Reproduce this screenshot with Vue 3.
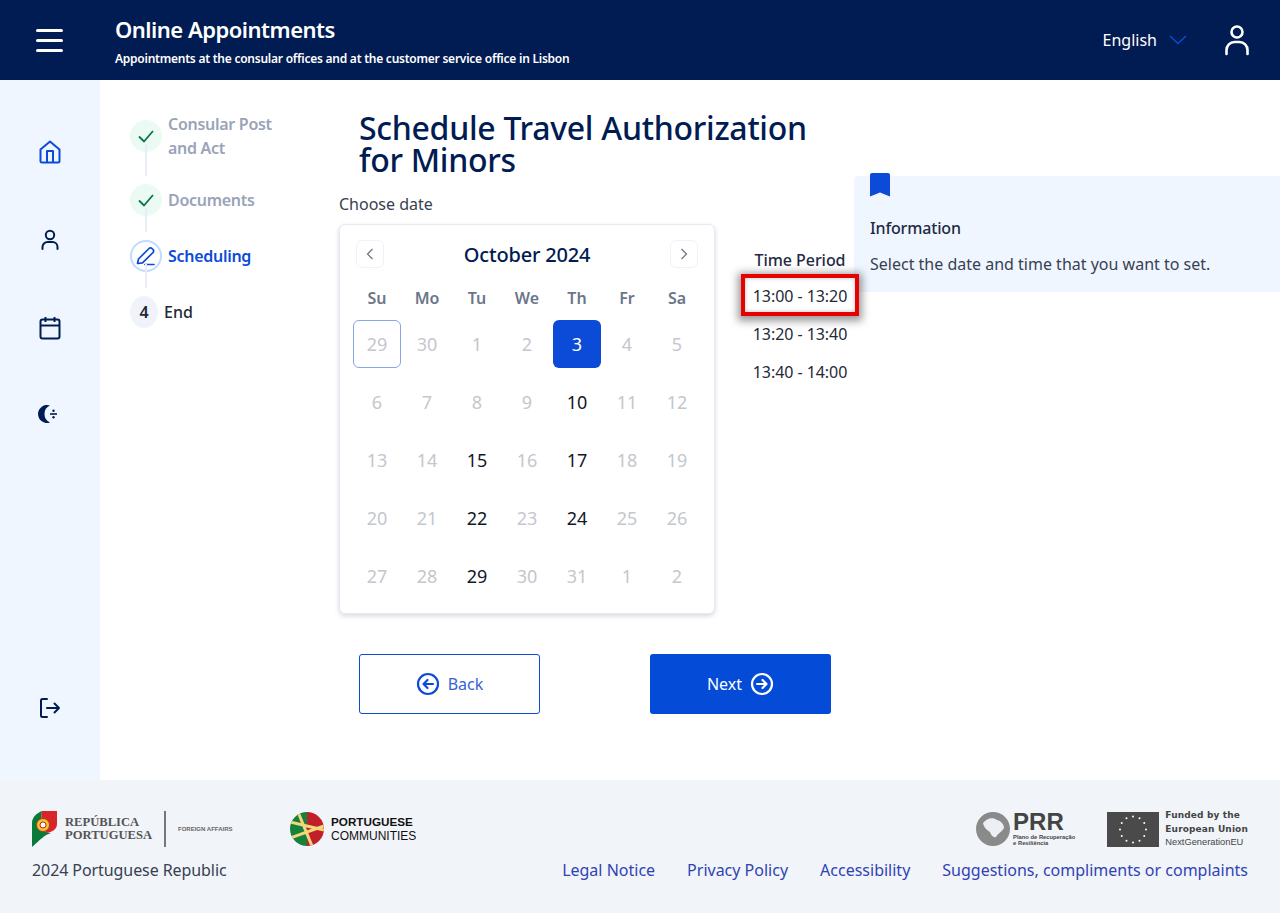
<script setup>
const weekdays = ['Su', 'Mo', 'Tu', 'We', 'Th', 'Fr', 'Sa']
const available = [3, 10, 15, 17, 22, 24, 29]
const seq = [29, 30, 1, 2, 3, 4, 5, 6, 7, 8, 9, 10, 11, 12, 13, 14, 15, 16, 17, 18, 19, 20, 21, 22, 23, 24, 25, 26, 27, 28, 29, 30, 31, 1, 2]
const days = seq.map((n, i) => {
  const inMonth = i >= 2 && i <= 32
  const cls = []
  if (i === 0) cls.push('today')
  if (i === 4) cls.push('selected')
  else if (inMonth && available.includes(n)) cls.push('avail')
  return { n, key: i, cls }
})
const times = ['13:00 - 13:20', '13:20 - 13:40', '13:40 - 14:00']
const stars = Array.from({ length: 12 }, (_, i) => {
  const a = (i * Math.PI) / 6
  return { x: 26 + Math.cos(a) * 13, y: 17.5 + Math.sin(a) * 13 }
})
</script>

<template>
  <div class="page">
    <header class="top">
      <div class="burger"><span></span><span></span><span></span></div>
      <div class="brand">
        <div class="brand-title">Online Appointments</div>
        <div class="brand-sub">Appointments at the consular offices and at the customer service office in Lisbon</div>
      </div>
      <div class="lang">
        <span>English</span>
        <svg width="18" height="10" viewBox="0 0 18 10" fill="none"><path d="M1 1l8 7.500L17 1" stroke="#0b4bd8" stroke-width="1.400"/></svg>
      </div>
      <svg class="user" width="24" height="32" viewBox="0 0 24 32" fill="none" stroke="#fff" stroke-width="2.600">
        <circle cx="12" cy="8" r="5.500"/>
        <path d="M1.500 30v-4a8 8 0 0 1 8-8h5a8 8 0 0 1 8 8v4" stroke-linecap="round"/>
      </svg>
    </header>

    <div class="body">
      <aside class="side">
        <svg class="nav nav-home" width="22" height="24" viewBox="0 0 22 24" fill="none" stroke="#0b4bd8" stroke-width="2" stroke-linejoin="round">
          <path d="M1.500 9.500L11 1.500l9.500 8V21a1.500 1.500 0 0 1-1.500 1.500H3A1.500 1.500 0 0 1 1.500 21z"/>
          <path d="M8 22.500V11h6v11.500"/>
        </svg>
        <svg class="nav nav-user" width="18" height="22" viewBox="0 0 18 22" fill="none" stroke="#001d52" stroke-width="2">
          <circle cx="9" cy="6" r="4.200"/>
          <path d="M1.500 20v-2a5 5 0 0 1 5-5h5a5 5 0 0 1 5 5v2" stroke-linecap="round"/>
        </svg>
        <svg class="nav nav-cal" width="22" height="24" viewBox="0 0 22 24" fill="none" stroke="#001d52" stroke-width="2">
          <rect x="1.500" y="3.500" width="19" height="19" rx="2"/>
          <path d="M1.500 9.500h19M6.500 1v5M15.500 1v5"/>
        </svg>
        <svg class="nav nav-moon" width="22" height="20" viewBox="0 0 22 20" fill="#001d52">
          <path d="M12 1.500A9 9 0 1 0 12 18.500A9.300 9.300 0 0 1 12 1.500z"/>
          <path d="M12 9.200h7v1.600h-7z"/><circle cx="15.500" cy="6.800" r="1.200"/><circle cx="15.500" cy="13.200" r="1.200"/>
        </svg>
        <svg class="nav nav-exit" width="22" height="22" viewBox="0 0 22 22" fill="none" stroke="#001d52" stroke-width="2" stroke-linecap="round" stroke-linejoin="round">
          <path d="M8 2H3.500A1.500 1.500 0 0 0 2 3.500v15A1.500 1.500 0 0 0 3.500 20H8"/>
          <path d="M8 11h12M15.500 6.500L20 11l-4.500 4.500"/>
        </svg>
      </aside>

      <main class="main">
        <ol class="steps">
          <li class="step done tall">
            <span class="dot"><svg width="18" height="14" viewBox="0 0 18 14" fill="none"><path d="M2 7.500l5 5L16 2" stroke="#04744f" stroke-width="1.800"/></svg></span>
            <span class="label">Consular Post<br>and Act</span>
          </li>
          <li class="step done">
            <span class="dot"><svg width="18" height="14" viewBox="0 0 18 14" fill="none"><path d="M2 7.500l5 5L16 2" stroke="#04744f" stroke-width="1.800"/></svg></span>
            <span class="label">Documents</span>
          </li>
          <li class="step current">
            <span class="dot">
              <svg width="20" height="20" viewBox="0 0 20 20" fill="none" stroke="#0b4bd8" stroke-width="1.700" stroke-linecap="round" stroke-linejoin="round"><path d="M1.500 17.500l1-4.500L13 2.500a2 2 0 0 1 3 0l1 1a2 2 0 0 1 0 3L6.500 16.800z"/><path d="M9 18.500h9"/></svg>
            </span>
            <span class="label">Scheduling</span>
          </li>
          <li class="step todo">
            <span class="dot">4</span>
            <span class="label">End</span>
          </li>
        </ol>

        <section class="center">
          <h1 class="title">Schedule Travel Authorization for Minors</h1>
          <div class="picker-row">
            <div class="picker">
              <div class="choose">Choose date</div>
              <div class="card">
                <div class="cal-head">
                  <button class="arrow"><svg width="8" height="12" viewBox="0 0 8 12" fill="none"><path d="M6.500 1l-5 5 5 5" stroke="#6b7280" stroke-width="1.200"/></svg></button>
                  <div class="month">October 2024</div>
                  <button class="arrow"><svg width="8" height="12" viewBox="0 0 8 12" fill="none"><path d="M1.500 1l5 5-5 5" stroke="#6b7280" stroke-width="1.200"/></svg></button>
                </div>
                <div class="grid week">
                  <div v-for="w in weekdays" :key="w" class="wd">{{ w }}</div>
                </div>
                <div class="grid">
                  <div v-for="d in days" :key="d.key" class="day" :class="d.cls">{{ d.n }}</div>
                </div>
              </div>
            </div>
            <div class="times">
              <div class="times-head">Time Period</div>
              <div v-for="(t, i) in times" :key="t" class="time" :class="{ marked: i === 0 }">{{ t }}</div>
            </div>
          </div>
          <div class="actions">
            <button class="btn ghost">
              <svg width="24" height="24" viewBox="0 0 24 24" fill="none" stroke="#0b4bd8" stroke-width="2.200" stroke-linecap="round" stroke-linejoin="round"><circle cx="12" cy="12" r="10"/><path d="M17 12H7.500M11.500 8l-4 4 4 4"/></svg>
              <span>Back</span>
            </button>
            <button class="btn solid">
              <span>Next</span>
              <svg width="24" height="24" viewBox="0 0 24 24" fill="none" stroke="#fff" stroke-width="2.200" stroke-linecap="round" stroke-linejoin="round"><circle cx="12" cy="12" r="10"/><path d="M7 12h9.500M12.500 8l4 4-4 4"/></svg>
            </button>
          </div>
        </section>

        <aside class="info">
          <svg class="bookmark" width="20" height="24" viewBox="0 0 20 24"><path d="M2 0h16a2 2 0 0 1 2 2v21.500l-10-4-10 4V2a2 2 0 0 1 2-2z" fill="#0b4bd8"/></svg>
          <div class="info-title">Information</div>
          <div class="info-text">Select the date and time that you want to set.</div>
        </aside>
      </main>
    </div>

    <footer class="foot">
      <div class="logos">
        <div class="logos-left">
          <div class="logo-rp">
            <svg class="fixed" width="26" height="36" viewBox="0 0 26 36">
              <path d="M0 12C0 6 5 2 10 0c-1 5-1 10 0 14 1 5 3 8 9 8-7 2-11 7-19 14z" fill="#0a7a3b"/>
              <path d="M10 0h15v13c0 6-6 8-10 9-3-2-4-5-5-8-1-5-1-10 0-14z" fill="#d9252a"/>
              <circle cx="11" cy="14" r="6.500" fill="#f2c230" stroke="#a3451f"/>
              <circle cx="11" cy="14" r="3" fill="#fff" stroke="#c22"/>
            </svg>
            <div class="rp-name">REPÚBLICA<br>PORTUGUESA</div>
            <div class="rp-bar"></div>
            <div class="rp-min">FOREIGN AFFAIRS</div>
          </div>
          <div class="logo-pc">
            <svg class="fixed" width="34" height="34" viewBox="0 0 34 34">
              <defs><clipPath id="globe"><circle cx="17" cy="17" r="17"/></clipPath></defs>
              <g clip-path="url(#globe)">
                <rect width="17" height="34" fill="#14813c"/>
                <rect x="17" width="17" height="34" fill="#c0202a"/>
                <path d="M0 10l34 8M0 26l34-12M8 0l14 34" stroke="#f4d77b" stroke-width="3" fill="none"/>
              </g>
            </svg>
            <div class="pc-name"><b>PORTUGUESE</b><br>COMMUNITIES</div>
          </div>
        </div>
        <div class="logos-right">
          <div class="logo-prr">
            <svg class="fixed" width="36" height="36" viewBox="0 0 36 36">
              <circle cx="18" cy="18" r="17" fill="#8a8a8a"/>
              <path d="M8 12c4-5 10-6 14-3 4 1 7 4 7 8-2 4-6 5-8 9-3 1-5-2-6-5-3-2-6-4-7-9z" fill="#eceff4"/>
            </svg>
            <div class="prr-text"><b>PRR</b><span>Plano de Recuperação<br>e Resiliência</span></div>
          </div>
          <div class="logo-eu">
            <svg class="fixed" width="52" height="35" viewBox="0 0 52 35">
              <rect width="52" height="35" fill="#4a4a4a"/>
              <circle v-for="(s, i) in stars" :key="i" :cx="s.x" :cy="s.y" r="1" fill="#fff"/>
            </svg>
            <div class="eu-text"><b>Funded by the<br>European Union</b><span>NextGenerationEU</span></div>
          </div>
        </div>
      </div>
      <div class="foot-row">
        <div class="copy">2024 Portuguese Republic</div>
        <nav class="links">
          <a>Legal Notice</a>
          <a>Privacy Policy</a>
          <a>Accessibility</a>
          <a>Suggestions, compliments or complaints</a>
        </nav>
      </div>
    </footer>
  </div>
</template>

<style>
html, body { margin: 0; background: #fff; }
</style>

<style scoped>
* { box-sizing: border-box; }
.page { width: 1280px; height: 913px; display: flex; flex-direction: column; font-family: "Noto Sans", sans-serif; color: #1f2937; overflow: hidden; }
.fixed { flex: none; }

.top { height: 80px; flex: none; background: #001c52; color: #fff; display: flex; align-items: center; padding: 0 31px 0 36px; }
.burger { width: 27px; display: flex; flex-direction: column; gap: 7px; margin-right: 52px; }
.burger span { height: 3px; border-radius: 2px; background: #fff; }
.brand { flex: 1; padding-top: 1px; }
.brand-title { font-size: 22px; font-weight: 600; line-height: 30px; letter-spacing: -0.5px; }
.brand-sub { font-size: 12px; font-weight: 600; line-height: 18px; margin-top: 6px; letter-spacing: -0.24px; }
.lang { display: flex; align-items: center; gap: 12px; font-size: 16px; margin-right: 38px; }

.body { flex: 1; display: flex; min-height: 0; }
.side { width: 100px; flex: none; background: #eff6ff; display: flex; flex-direction: column; align-items: center; position: relative; }
.nav { position: absolute; }
.nav-home { left: 39px; top: 60px; }
.nav-user { left: 41px; top: 149px; }
.nav-cal { left: 39px; top: 236px; }
.nav-moon { left: 38px; top: 324px; }
.nav-exit { left: 39px; top: 617px; }

.main { flex: 1; display: flex; align-items: flex-start; position: relative; }
.steps { list-style: none; margin: 0; width: 239px; padding: 32px 0 0 30px; flex: none; }
.step { display: flex; position: relative; height: 56px; }
.step.tall { height: 64px; }
.step:not(:last-child)::after { content: ""; position: absolute; left: 15px; top: 32px; bottom: 0; width: 2px; background: #e9eef6; }
.dot { width: 32px; height: 32px; border-radius: 50%; display: flex; align-items: center; justify-content: center; flex: none; margin-top: 8px; }
.label { font-size: 16px; font-weight: 600; line-height: 24px; margin-left: 6px; letter-spacing: -0.28px; }
.step.done:not(.tall) .label, .step.current .label, .step.todo .label { margin-top: 12px; }
.step.done .dot { background: #ebfaf3; }
.step.done .label { color: #9aa3b8; }
.step.current .dot { background: #fff; border: 2px solid #bfdbfe; }
.step.current .label { color: #0b4bd8; }
.step.todo .dot { background: #f0f3f9; font-size: 16px; font-weight: 600; width: 28px; }
.step.todo .label { color: #1f2937; font-weight: 500; letter-spacing: 0; }

.center { width: 515px; flex: none; }
.title { margin: 32px 0 0 20px; width: 470px; font-size: 32px; line-height: 32px; font-weight: 500; color: #001c52; letter-spacing: -0.28px; }
.picker-row { display: flex; margin-top: 16px; }
.picker { width: 376px; flex: none; }
.choose { font-size: 16px; line-height: 24px; height: 32px; color: #374151; }
.card { height: 390px; border: 1px solid #e5e9f2; border-radius: 6px; box-shadow: 0 2px 5px rgba(30, 40, 70, 0.18); padding: 14px 12px 0 12px; background: #fff; }
.cal-head { display: flex; align-items: center; justify-content: space-between; padding: 0 4px 0 4px; height: 30px; }
.arrow { width: 28px; height: 28px; padding: 0; border: 1px solid #f0f2f7; border-radius: 6px; background: #fff; display: flex; align-items: center; justify-content: center; }
.month { font-size: 20px; font-weight: 500; color: #001c52; letter-spacing: -0.2px; }
.grid { display: grid; grid-template-columns: repeat(7, 50px); }
.week { margin-top: 17px; height: 34px; }
.wd { text-align: center; font-size: 16px; font-weight: 600; color: #6b7689; line-height: 24px; }
.day { width: 48px; height: 48px; margin: 0 1px 10px; display: flex; align-items: center; justify-content: center; font-size: 18px; color: #c4c7cd; border-radius: 6px; border: 1px solid transparent; }
.day.today { border-color: #87a5ec; }
.day.avail { color: #111827; }
.day.selected { background: #0b4bd8; color: #fff; }

.times { width: 118px; flex: none; margin-left: 26px; padding-top: 56px; position: relative; z-index: 2; }
.times-head { text-align: center; font-size: 16px; font-weight: 500; line-height: 24px; color: #1f2a44; margin-bottom: 2px; letter-spacing: -0.05px; }
.time { height: 38px; display: flex; align-items: center; justify-content: center; font-size: 16px; color: #1f2937; letter-spacing: -0.06px; }
.time.marked { height: 42px; margin-bottom: -1px; padding-top: 2px; border: 4px solid #e60000; box-shadow: 0 2px 8px 3px rgba(0, 0, 0, 0.4), inset 0 0 4px rgba(0, 0, 0, 0.25); background: #fff; }

.actions { display: flex; gap: 110px; margin: 40px 0 0 20px; }
.btn { width: 181px; height: 60px; border-radius: 3px; font: 400 16px "Noto Sans", sans-serif; display: flex; align-items: center; justify-content: center; gap: 8px; }
.ghost { background: #fff; border: 1px solid #0b4bd8; color: #3563d6; }
.solid { background: #044bd8; border: 0; color: #fff; }

.info { width: 426px; height: 116px; margin-top: 96px; background: #eff6ff; border-radius: 4px 0 0 4px; padding: 0 16px; position: relative; }
.bookmark { position: absolute; left: 16px; top: -3px; }
.info-title { margin-top: 40px; font-size: 16px; font-weight: 500; line-height: 24px; color: #1f2a44; letter-spacing: -0.15px; }
.info-text { margin-top: 12px; font-size: 16px; line-height: 24px; color: #374151; }

.foot { height: 133px; flex: none; background: #f1f4f9; padding: 30px 32px 0; }
.logos { display: flex; justify-content: space-between; align-items: center; height: 38px; }
.logos-left { display: flex; align-items: center; gap: 57px; }
.logo-rp { display: flex; align-items: center; width: 201px; }
.rp-name { margin-left: 7px; font: 700 12.600px/13px "Liberation Serif", serif; color: #555; white-space: nowrap; }
.rp-bar { width: 2px; height: 36px; background: #777; margin-left: 12px; flex: none; }
.rp-min { font: 700 6px "Liberation Sans", sans-serif; color: #666; margin-left: 12px; white-space: nowrap; }
.logo-pc { display: flex; align-items: center; gap: 7px; }
.pc-name { font: 400 12px/14px "Liberation Sans", sans-serif; color: #111; }
.pc-name b { font-size: 11.700px; }
.logos-right { display: flex; align-items: center; gap: 32px; }
.logo-prr { display: flex; align-items: center; gap: 2px; }
.prr-text { display: flex; flex-direction: column; color: #444; }
.prr-text b { font: 700 24px/20px "Liberation Sans", sans-serif; }
.prr-text span { font: 700 5.800px/6px "Liberation Sans", sans-serif; margin-top: 2px; white-space: nowrap; }
.logo-eu { display: flex; align-items: center; gap: 6px; }
.eu-text { display: flex; flex-direction: column; color: #444; }
.eu-text b { font: 700 9px/13.500px "DejaVu Sans", sans-serif; letter-spacing: 0.14px; white-space: nowrap; }
.eu-text span { font: 400 9.300px/13px "Liberation Sans", sans-serif; white-space: nowrap; }
.foot-row { display: flex; justify-content: space-between; align-items: center; margin-top: 8px; height: 28px; }
.copy { font-size: 16px; color: #374151; letter-spacing: -0.08px; }
.links { display: flex; gap: 32px; font-size: 16px; color: #2f43b5; }
</style>
